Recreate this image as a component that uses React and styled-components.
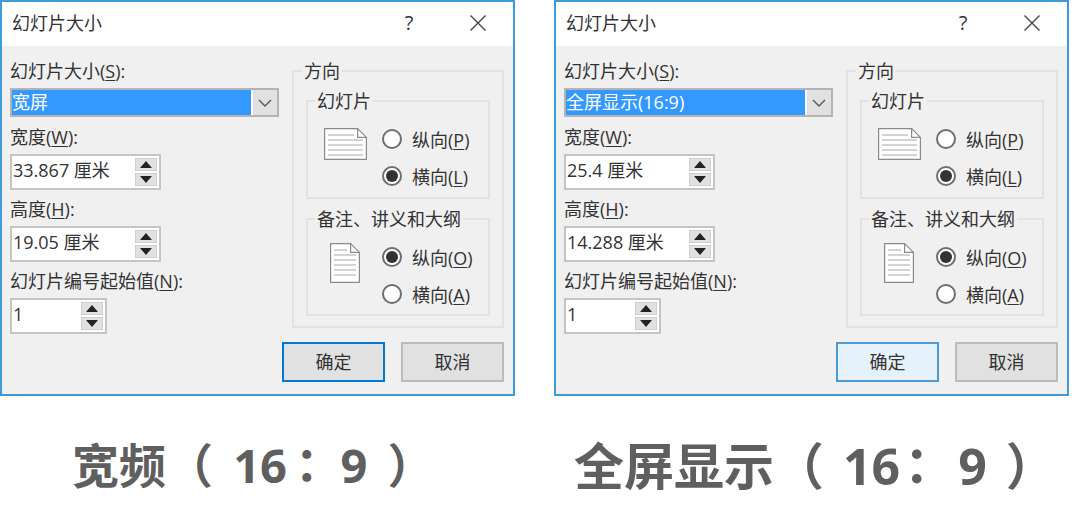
import React from 'react'
import styled, { createGlobalStyle } from 'styled-components'

const GlobalStyle = createGlobalStyle`
  html, body {
    margin: 0;
    background: #fff;
  }
  body {
    font-family: "Open Sans", "Noto Sans CJK SC", sans-serif;
    color: #333;
  }
`

const Page = styled.div`
  width: 1080px;
  height: 529px;
  overflow: hidden;
  display: grid;
  grid-template-columns: 515px 515px;
  column-gap: 39px;
  align-content: start;
`

const Window = styled.div`
  width: 515px;
  height: 396px;
  box-sizing: border-box;
  border: 2px solid #3f9ad9;
  background: #f0f0f0;
  display: flex;
  flex-direction: column;
`

const TitleBar = styled.div`
  height: 44px;
  box-sizing: border-box;
  flex: none;
  background: #fff;
  display: flex;
  align-items: center;
  padding: 0 0 4px 10px;
  font-size: 18px;
`

const TitleText = styled.span`
  flex: 1;
`

const HelpButton = styled.span`
  width: 20px;
  margin-right: 50px;
  text-align: center;
  font-size: 20px;
`

const CloseButton = styled.span`
  width: 18px;
  height: 18px;
  margin: 2px 26px 0 0;
  display: flex;
`

const Body = styled.div`
  flex: 1;
  padding: 13px 9px 12px 8px;
  display: flex;
  flex-direction: column;
`

const Columns = styled.div`
  display: flex;
  justify-content: space-between;
  height: 275px;
`

const LeftColumn = styled.div`
  width: 269px;
  display: flex;
  flex-direction: column;
`

const Label = styled.div`
  font-size: 18px;
  line-height: 24px;
  margin-top: ${props => props.$gap ?? 7}px;
  margin-bottom: 5px;
  white-space: nowrap;
`

const Key = styled.span`
  text-decoration: underline;
  text-underline-offset: 2px;
`

const Select = styled.div`
  height: 29px;
  box-sizing: border-box;
  border: 2px solid #b4b4b4;
  background: #fff;
  display: flex;
  margin-bottom: 1px;
`

const SelectValue = styled.div`
  flex: 1;
  background: #3399ff;
  color: #fff;
  font-size: 18px;
  line-height: 24px;
  margin-right: 2px;
`

const SelectArrow = styled.div`
  width: 24px;
  background: #e1e1e1;
  display: flex;
  align-items: center;
  justify-content: center;
`

const Spin = styled.div`
  width: ${props => props.$width}px;
  height: 36px;
  box-sizing: border-box;
  border: 2px solid #c4c4c4;
  background: #fff;
  display: flex;
`

const SpinText = styled.div`
  flex: 1;
  font-size: 18px;
  line-height: 29px;
  padding-left: 1px;
  white-space: nowrap;
`

const SpinButtons = styled.div`
  width: 22px;
  padding: 2px 2px 2px 0;
  display: flex;
  flex-direction: column;
  gap: 2px;
  flex: none;
`

const SpinButton = styled.div`
  flex: 1;
  background: #e1e1e1;
  border: 1px solid #cfcfcf;
  display: flex;
  align-items: center;
  justify-content: center;
`

const Group = styled.fieldset`
  margin: 0;
  box-sizing: border-box;
  border: 2px solid #e2e2e2;
  min-width: 0;
`

const OuterGroup = styled(Group)`
  width: 212px;
  height: 269px;
  padding: 6px 12px 0;
  display: flex;
  flex-direction: column;
  gap: 8px;
`

const InnerGroup = styled(Group)`
  height: ${props => props.$height}px;
  padding: 7px 0 0 14px;
  display: flex;
  align-items: flex-start;
`

const GroupTitle = styled.legend`
  font-size: 18px;
  line-height: 24px;
  padding: 0 2px;
  margin-left: ${props => props.$inset}px;
`

const PageIcon = styled.div`
  width: ${props => props.$width}px;
  margin-left: ${props => props.$left}px;
  margin-top: ${props => props.$top}px;
  flex: none;
  display: flex;
`

const Options = styled.div`
  margin-left: auto;
  width: 106px;
  display: flex;
  flex-direction: column;
`

const Option = styled.div`
  height: 37px;
  display: flex;
  align-items: center;
  gap: 10px;
  font-size: 18px;
  white-space: nowrap;
`

const RadioMark = styled.span`
  width: 20px;
  height: 20px;
  box-sizing: border-box;
  border: 2px solid #6e6e6e;
  border-radius: 50%;
  background: #fff;
  flex: none;
  display: flex;
  align-items: center;
  justify-content: center;
`

const RadioDot = styled.span`
  width: 12px;
  height: 12px;
  border-radius: 50%;
  background: #333;
`

const Footer = styled.div`
  margin-top: 8px;
  display: flex;
  justify-content: flex-end;
  gap: 16px;
`

const Button = styled.div`
  width: 103px;
  height: 40px;
  box-sizing: border-box;
  border: 2px solid ${props => props.$border};
  background: ${props => props.$fill};
  font-size: 18px;
  padding-bottom: 3px;
  display: flex;
  align-items: center;
  justify-content: center;
`

const Caption = styled.div`
  margin-top: 37px;
  padding-left: ${props => props.$left}px;
  font-size: ${props => props.$size}px;
  font-weight: 700;
  line-height: 60px;
  color: #5f5f5f;
  white-space: pre;
  word-spacing: ${props => props.$spacing}px;
`

// palt tightens the full-width colon's box so the margins set its place
const Colon = styled.span`
  font-family: "Noto Sans CJK TC", sans-serif;
  font-feature-settings: "palt";
  margin: 0 ${props => props.$after}px 0 ${props => props.$before}px;
`

const ChevronDown = () => (
  <svg width="14" height="8" viewBox="0 0 14 8" fill="none" stroke="#555" strokeWidth="1.4">
    <path d="M1 1l6 6 6-6" />
  </svg>
)

const Triangle = ({ down }) => (
  <svg width="12" height="7" viewBox="0 0 12 7" fill="#222">
    <path d={down ? 'M0 0h12L6 7z' : 'M0 7h12L6 0z'} />
  </svg>
)

const LandscapePage = () => (
  <svg width="43" height="32" viewBox="0 0 43 32" fill="#fff" stroke="#8a8a8a" strokeWidth="1.2">
    <path d="M.6.6h33l8.8 8.8v22H.6z" />
    <path d="M33.6.6v8.8h8.8" fill="none" />
    <path d="M4 7h26M4 12h35M4 17h35M4 22h35M4 27h35" fill="none" stroke="#a8a8a8" />
  </svg>
)

const PortraitPage = () => (
  <svg width="30" height="40" viewBox="0 0 30 40" fill="#fff" stroke="#8a8a8a" strokeWidth="1.2">
    <path d="M.6.6h20l8.8 8.8v30H.6z" />
    <path d="M20.6.6v8.8h8.8" fill="none" />
    <path d="M4 7h13M4 12h22M4 17h22M4 22h22M4 27h22M4 32h22" fill="none" stroke="#a8a8a8" />
  </svg>
)

const Field = ({ label, hotkey, gap, width, value }) => (
  <>
    <Label $gap={gap}>
      {label}(<Key>{hotkey}</Key>):
    </Label>
    <Spin $width={width}>
      <SpinText>{value}</SpinText>
      <SpinButtons>
        <SpinButton><Triangle /></SpinButton>
        <SpinButton><Triangle down /></SpinButton>
      </SpinButtons>
    </Spin>
  </>
)

const Radio = ({ label, hotkey, checked }) => (
  <Option>
    <RadioMark>{checked && <RadioDot />}</RadioMark>
    <span>
      {label}(<Key>{hotkey}</Key>)
    </span>
  </Option>
)

const Dialog = ({ size, width, height, primary }) => (
  <Window>
    <TitleBar>
      <TitleText>幻灯片大小</TitleText>
      <HelpButton>?</HelpButton>
      <CloseButton>
        <svg width="18" height="18" viewBox="0 0 18 18" stroke="#444" strokeWidth="1.4">
          <path d="M1.5 1.5l15 15M16.5 1.5l-15 15" />
        </svg>
      </CloseButton>
    </TitleBar>
    <Body>
      <Columns>
        <LeftColumn>
          <Label $gap={0}>
            幻灯片大小(<Key>S</Key>):
          </Label>
          <Select>
            <SelectValue>{size}</SelectValue>
            <SelectArrow><ChevronDown /></SelectArrow>
          </Select>
          <Field label="宽度" hotkey="W" width={151} value={width} />
          <Field label="高度" hotkey="H" width={151} value={height} />
          <Field label="幻灯片编号起始值" hotkey="N" width={97} value="1" />
        </LeftColumn>
        <OuterGroup>
          <GroupTitle $inset={-4}>方向</GroupTitle>
          <InnerGroup $height={110}>
            <GroupTitle $inset={-7}>幻灯片</GroupTitle>
            <PageIcon $width={43} $left={2} $top={8}><LandscapePage /></PageIcon>
            <Options>
              <Radio label="纵向" hotkey="P" />
              <Radio label="横向" hotkey="L" checked />
            </Options>
          </InnerGroup>
          <InnerGroup $height={109}>
            <GroupTitle $inset={-7}>备注、讲义和大纲</GroupTitle>
            <PageIcon $width={30} $left={8} $top={5}><PortraitPage /></PageIcon>
            <Options>
              <Radio label="纵向" hotkey="O" checked />
              <Radio label="横向" hotkey="A" />
            </Options>
          </InnerGroup>
        </OuterGroup>
      </Columns>
      <Footer>
        <Button $border={primary.border} $fill={primary.fill}>确定</Button>
        <Button $border="#bcbcbc" $fill="#e1e1e1">取消</Button>
      </Footer>
    </Body>
  </Window>
)

const App = () => (
  <Page>
    <GlobalStyle />
    <Dialog
      size="宽屏"
      width="33.867 厘米"
      height="19.05 厘米"
      primary={{ border: '#0078d7', fill: '#e1e1e1' }}
    />
    <Dialog
      size="全屏显示(16:9)"
      width="25.4 厘米"
      height="14.288 厘米"
      primary={{ border: '#4a9ad8', fill: '#e5f1fb' }}
    />
    <Caption $left={72} $size={47} $spacing={8}>
      宽频（ 16<Colon $before={8} $after={22}>：</Colon>9 ）
    </Caption>
    <Caption $left={20} $size={50} $spacing={6}>
      全屏显示（ 16<Colon $before={4} $after={29}>：</Colon>9 ）
    </Caption>
  </Page>
)

export default App
